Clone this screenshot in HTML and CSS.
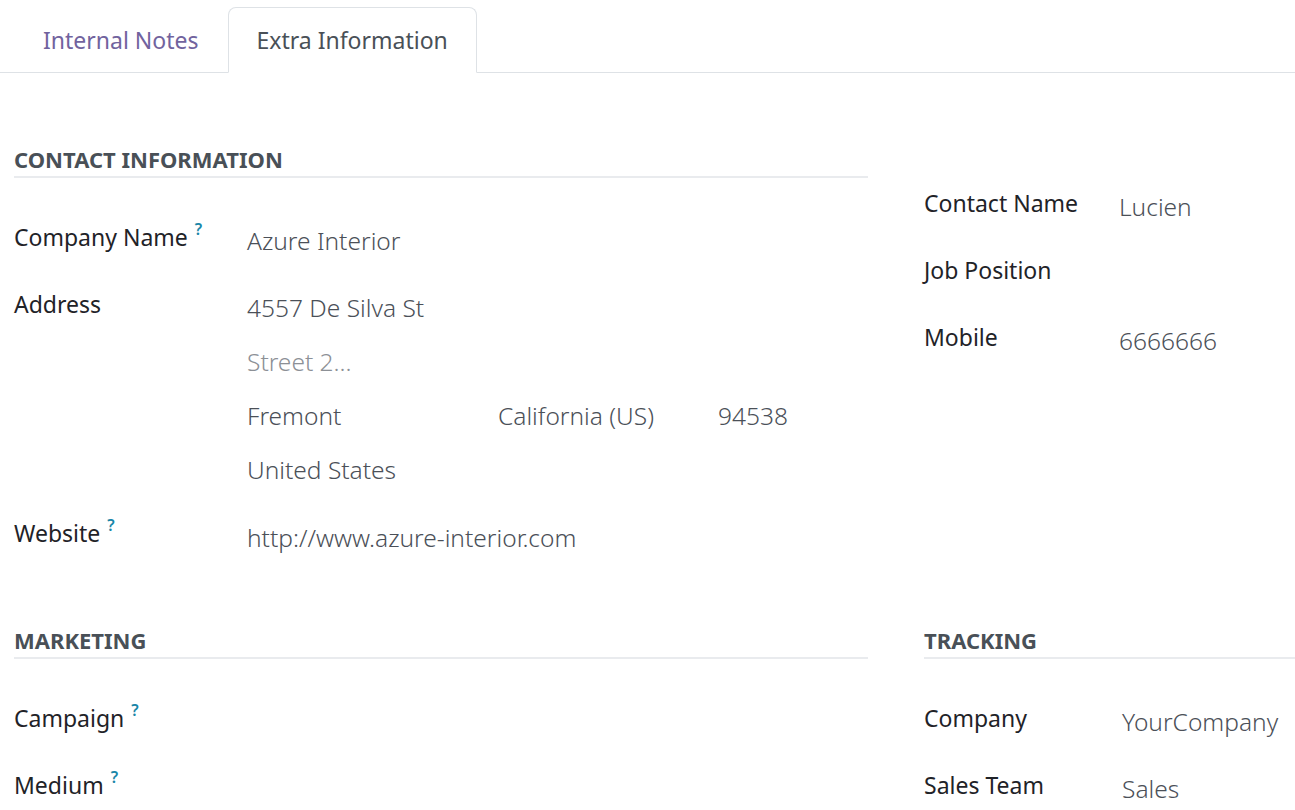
FILE: index.html
```html
<!DOCTYPE html>
<html>
<head>
    <title>Extra Information</title>
    <link rel="stylesheet" href="styles.css">
</head>
<body>
    <div class="tabs">
        <div class="tab">Internal Notes</div>
        <div class="tab active">Extra Information</div>
    </div>

    <div class="sheet">
        <div class="group">
            <div class="group-title">Contact Information</div>
            <div class="row">
                <div class="label">Company Name<sup>?</sup></div>
                <div class="value">Azure Interior</div>
            </div>
            <div class="row">
                <div class="label">Address</div>
                <div class="value">
                    <div class="line">4557 De Silva St</div>
                    <div class="line placeholder">Street 2...</div>
                    <div class="line city">
                        <span>Fremont</span>
                        <span>California (US)</span>
                        <span>94538</span>
                    </div>
                    <div class="line">United States</div>
                </div>
            </div>
            <div class="row">
                <div class="label">Website<sup>?</sup></div>
                <div class="value website">http://www.azure-interior.com</div>
            </div>
        </div>

        <div class="group side no-title">
            <div class="row">
                <div class="label">Contact Name</div>
                <div class="value">Lucien</div>
            </div>
            <div class="row">
                <div class="label">Job Position</div>
                <div class="value"></div>
            </div>
            <div class="row">
                <div class="label">Mobile</div>
                <div class="value">6666666</div>
            </div>
        </div>

        <div class="group bottom">
            <div class="group-title">Marketing</div>
            <div class="row">
                <div class="label">Campaign<sup>?</sup></div>
                <div class="value"></div>
            </div>
            <div class="row">
                <div class="label">Medium<sup>?</sup></div>
                <div class="value"></div>
            </div>
        </div>

        <div class="group side tracking bottom">
            <div class="group-title">Tracking</div>
            <div class="row">
                <div class="label">Company</div>
                <div class="value">YourCompany</div>
            </div>
            <div class="row">
                <div class="label">Sales Team</div>
                <div class="value">Sales</div>
            </div>
        </div>
    </div>
</body>
</html>
```

FILE: styles.css
```css
body {
    margin: 0;
    background: white;
    color: #1f2328;
    font-family: "Noto Sans", "Open Sans", sans-serif;
    font-size: 23px;
    overflow: hidden;
}
.tabs {
    display: flex;
    margin-top: 7px;
    padding-left: 14px;
    border-bottom: 1px solid #dee2e6;
}
.tab {
    padding: 15px 28px 15px;
    line-height: 34px;
    color: #71639e;
    border: 1px solid transparent;
    border-top-left-radius: 8px;
    border-top-right-radius: 8px;
    margin-bottom: -1px;
}
.tab.active {
    color: #495057;
    background: white;
    border-color: #dee2e6;
    border-bottom-color: white;
}
.sheet {
    display: grid;
    grid-template-columns: 854px 1fr;
    column-gap: 56px;
    align-items: start;
    padding: 72px 0 0 14px;
}
.group-title {
    font-size: 22px;
    font-weight: bold;
    text-transform: uppercase;
    color: #495057;
    line-height: 28px;
    padding-bottom: 3px;
    border-bottom: 2px solid #e9ebee;
    margin-bottom: 42px;
}
.group.no-title {
    padding-top: 41px;
}
.group.bottom {
    margin-top: 42px;
}
.row {
    display: grid;
    grid-template-columns: 233px 1fr;
    min-height: 38px;
    margin-bottom: 29px;
}
.side .row {
    grid-template-columns: 195px 1fr;
}
.tracking .row {
    grid-template-columns: 198px 1fr;
}
.label {
    line-height: 34px;
}
.label sup {
    font-size: 16px;
    font-weight: 600;
    color: #1a86a8;
    margin-left: 7px;
    vertical-align: 11px;
    line-height: 0;
}
.value {
    line-height: 34px;
    margin-top: 4px;
    color: #4b5058;
    font-size: 24.5px;
    font-weight: 300;
}
.value.website {
    margin-top: 5px;
}
.line + .line {
    margin-top: 20px;
}
.placeholder {
    color: #8c9096;
}
.city {
    display: grid;
    grid-template-columns: 251px 220px 1fr;
}
```
